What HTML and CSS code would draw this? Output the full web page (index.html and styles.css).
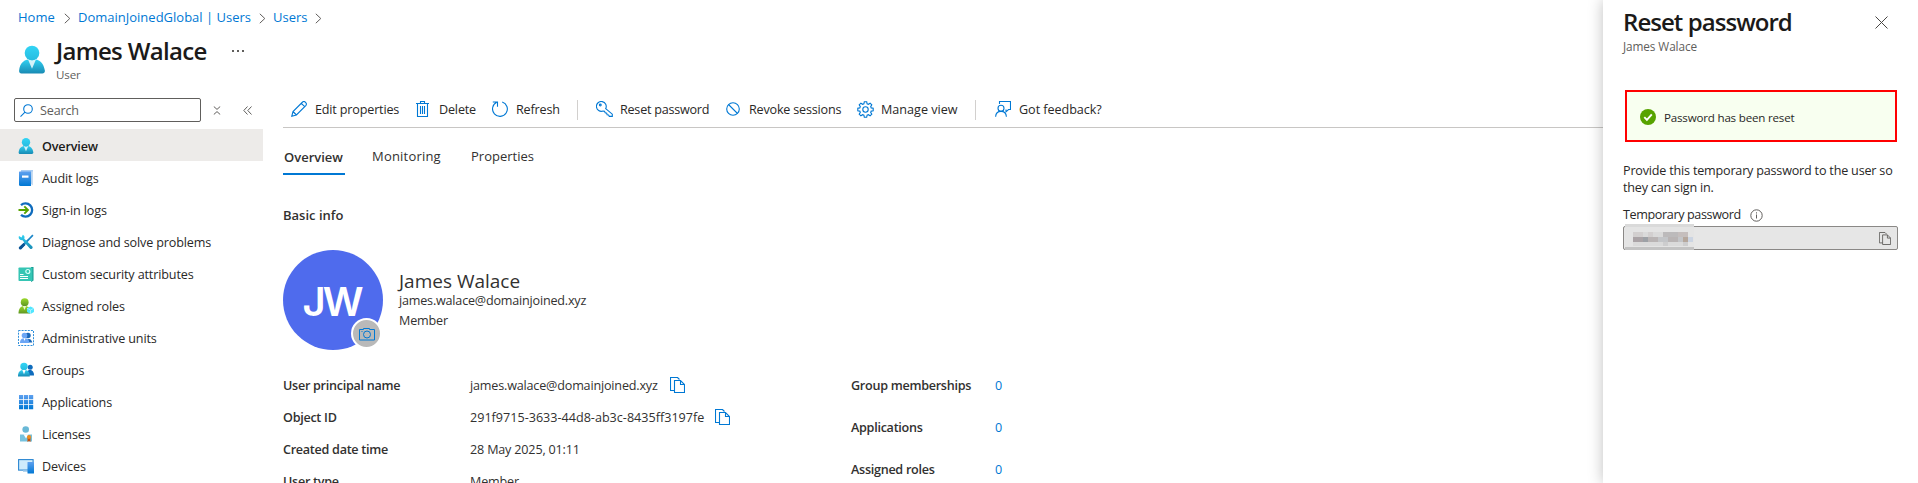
FILE: index.html
```
<!DOCTYPE html>
<html lang="en">
<head>
<meta charset="utf-8">
<title>James Walace - User</title>
<link rel="stylesheet" href="styles.css">
</head>
<body>
<svg class="defs" width="0" height="0" aria-hidden="true">
  <defs>
    <linearGradient id="cyan" x1="0" y1="0" x2="0" y2="1"><stop offset="0" stop-color="#32d4f5"/><stop offset="1" stop-color="#198ab3"/></linearGradient>
    <linearGradient id="cyan-head" x1="0" y1="0" x2="0" y2="1"><stop offset="0" stop-color="#32d4f5"/><stop offset="1" stop-color="#27bce0"/></linearGradient>
    <linearGradient id="blue" x1="0" y1="0" x2="0" y2="1"><stop offset="0" stop-color="#5ea0ef"/><stop offset="1" stop-color="#0078d4"/></linearGradient>
    <linearGradient id="green" x1="0" y1="0" x2="0" y2="1"><stop offset="0" stop-color="#9bd92b"/><stop offset="1" stop-color="#5e9624"/></linearGradient>
    <symbol id="user" viewBox="0 0 18 18">
      <path d="M15.7 18c.9 0 1.6-.7 1.6-1.6v-.2C16.6 11.300 14 8.600 9 8.600S1.200 11 .7 16.200C.6 17.100 1.300 18 2.200 18z" fill="url(#cyan)"/>
      <path d="M9 9.500c-1 0-1.900-.3-2.700-.8L9 15l2.700-6.300c-.8.5-1.700.8-2.700.8z" fill="#fff" opacity=".8"/>
      <circle cx="9" cy="4.800" r="4.700" fill="url(#cyan-head)"/>
    </symbol>
    <symbol id="chev" viewBox="0 0 7 11"><path d="M.8.800 5.800 5.500.8 10.200" fill="none" stroke="#605e5c"/></symbol>
    <symbol id="copy" viewBox="0 0 15 16"><path d="M4.500 13.500h-4V.500h7l2 2M4.500 3.500h6l4 4v8h-10zM10.500 3.500v4h4" fill="none" stroke="currentColor" stroke-width="1.100"/></symbol>
  </defs>
</svg>

<div class="blade">
  <nav class="crumbs">
    <a class="home">Home</a><svg><use href="#chev"/></svg>
    <a class="tenant">DomainJoinedGlobal | Users</a><svg><use href="#chev"/></svg>
    <a class="users">Users</a><svg><use href="#chev"/></svg>
  </nav>

  <header class="head">
    <svg class="head-icon"><use href="#user"/></svg>
    <div>
      <div class="head-line"><h1>James Walace</h1><span class="dots"><i></i><i></i><i></i></span></div>
      <div class="kind">User</div>
    </div>
  </header>

  <div class="body">
    <aside class="side">
      <div class="search-row">
        <div class="search">
          <svg width="13" height="13" viewBox="0 0 13 13" fill="none" stroke="#0078d4" stroke-width="1.100"><circle cx="8" cy="5" r="4.300"/><path d="M5 8.200.5 12.600"/></svg>
          <span>Search</span>
        </div>
        <svg class="expand" width="8" height="9" viewBox="0 0 8 9" fill="none" stroke="#605e5c"><path d="M.8.500 4 3.400 7.200.500M.8 8.500 4 5.600l3.200 2.900"/></svg>
        <svg width="9" height="9" viewBox="0 0 9 9" fill="none" stroke="#605e5c"><path d="M4.500.500.800 4.500l3.700 4M8.500.500 4.800 4.500l3.700 4"/></svg>
      </div>
      <ul class="menu">
        <li class="on"><svg viewBox="0 0 18 18"><use href="#user"/></svg>Overview</li>
        <li><svg viewBox="0 0 16 16"><path d="M3 0h12v14H3z" fill="#a9cdf3"/><path d="M13.500 1.500H15V15l-1.500.5z" fill="#c8dcf0"/><path d="M1.500 1.500H13V16H2.500a1.500 1.500 0 0 1-1.500-1.500V2z" fill="url(#blue)"/><path d="M4 5.500h6.500v2.200H4z" fill="#fff"/></svg>Audit logs</li>
        <li><svg viewBox="0 0 16 16"><path d="M3 3.200A6.600 6.600 0 1 1 3 12.800" fill="none" stroke="#0f6cbd" stroke-width="2.300"/><path d="M.5 8h9M6.300 4.300 10 8l-3.700 3.700" fill="none" stroke="#57a300" stroke-width="1.900"/></svg>Sign-in logs</li>
        <li><svg viewBox="0 0 16 16"><path d="m14.300.500 1.200 1.200L12.300 5 3.200 15.200 1 13.200 11 4z" fill="#1b86c8"/><path d="M4.800.700 3.500 3.400 1 2C0 4.200 1.700 6.500 4.200 6.100l7.700 8.300c1.600 1.600 3.800-.5 2.300-2.100L6.300 4.700C6.900 2.800 6.400 1.400 4.800.700z" fill="url(#cyan)"/><path d="m1 13.200 4.500-4.100 1.900 2-4.200 4.100c-1.200.9-3.100-.7-2.200-2z" fill="#0b5394"/></svg>Diagnose and solve problems</li>
        <li><svg viewBox="0 0 16 16"><path d="M13 1h2.500v13.500L13 16z" fill="#12988e"/><rect x=".5" y="1.500" width="14" height="13.500" rx=".8" fill="#36c5b4"/><path d="M2 8.500h3.500M2 10.500h8M2 12.500h8" stroke="#fff"/><circle cx="9.800" cy="5.500" r="2" fill="none" stroke="#d8fff9" stroke-width="1.200"/></svg>Custom security attributes</li>
        <li><svg viewBox="0 0 16 16"><path d="M.5 15.500C.5 10.500 2.500 8 6.500 8s6.500 2.500 6.500 7.500z" fill="url(#green)"/><path d="M4.800 8h3.400L6.500 12z" fill="#e8f7d0"/><circle cx="6.700" cy="4.200" r="3.900" fill="url(#green)"/><path d="m12.500 8.500 3.500 1.700v3.700L12.500 16 9 13.900v-3.700z" fill="#50e6ff"/><path d="m9 10.200 3.500 1.800 3.500-1.800M12.500 12v4" fill="none" stroke="#c9f7ff" stroke-width=".7"/></svg>Assigned roles</li>
        <li><svg viewBox="0 0 16 16"><rect x=".5" y=".5" width="15" height="15" fill="none" stroke="#2f8fdb" stroke-dasharray="2 1.100"/><circle cx="10" cy="5.500" r="2.700" fill="#1967b8"/><path d="M8 12.500c0-4 5-5.500 6.300 0z" fill="#1967b8"/><circle cx="6.500" cy="5.500" r="2.800" fill="#6ca6f5"/><path d="M2 13c0-3.500 1.800-4.800 4.500-4.800S11.200 9.500 11.200 13z" fill="#6ca6f5"/><path d="M5.500 8.300h2L6.500 11z" fill="#fff"/></svg>Administrative units</li>
        <li><svg viewBox="0 0 16 16"><circle cx="12.200" cy="5.200" r="2.500" fill="#0f6cbd"/><path d="M8 13.500c0-4 2-5.500 4-5.500s4 1.500 4 5.500z" fill="#0f6cbd"/><circle cx="6" cy="4.500" r="3.700" fill="url(#cyan-head)"/><path d="M0 14.500C0 10 2 7.800 5.900 7.800S11.800 10 11.800 14.500z" fill="url(#cyan)"/><path d="M4.300 8h3.400L6 12.200z" fill="#fff"/></svg>Groups</li>
        <li><svg viewBox="0 0 16 16"><path d="M1 1h4.200v4.200H1zM6 1h4.200v4.200H6zM11 1h4.200v4.200H11zM1 6h4.200v4.200H1zM6 6h4.200v4.200H6zM11 6h4.200v4.200H11zM1 11h4.200v4.200H1zM6 11h4.200v4.200H6zM11 11h4.200v4.200H11z" fill="url(#blue)"/></svg>Applications</li>
        <li><svg viewBox="0 0 16 16"><path d="M2 15.500V8.500h12v7z" fill="#76c2de"/><path d="M5.500 8.300h5L8 12.500z" fill="#fff"/><circle cx="7.700" cy="3.500" r="3.300" fill="#69b8d6"/><path d="M9.500 11h3v5l-1.500-1-1.500 1z" fill="#c2500d"/><circle cx="11" cy="11" r="2" fill="#f08c1a"/></svg>Licenses</li>
        <li><svg viewBox="0 0 16 16"><rect x=".6" y="1.600" width="14.500" height="10.500" fill="#cfebfc" stroke="#2a86d1" stroke-width="1.100"/><path d="M5 12.500h5V14H5z" fill="#b4d5ee"/><rect x="9.500" y="4" width="6.500" height="11.500" rx=".5" fill="url(#blue)"/></svg>Devices</li>
      </ul>
    </aside>

    <main class="main">
      <div class="bar">
        <span class="cmd edit"><svg width="16" height="16" viewBox="0 0 16 16"><path d="m.8 15.200 1.200-4.700L11.600 1c1.800-1.500 4.800 1.200 3.400 3.300L5.400 14zM2 10.500 5.400 14M10.300 2.300l3.400 3.400"/></svg>Edit properties</span>
        <span class="cmd del"><svg width="13" height="16" viewBox="0 0 13 16"><path d="M0 2.500h13M4.500 2.500v-2h4v2M1.500 2.500v13h10v-13M4.500 5v8M6.500 5v8M8.500 5v8"/></svg>Delete</span>
        <span class="cmd refresh"><svg width="16" height="16" viewBox="0 0 16 16"><path d="M10.200.9A7.400 7.400 0 1 1 4.700 1.300M.8 1h4.700v4.700"/></svg>Refresh</span>
        <span class="sep s1"></span>
        <span class="cmd reset"><svg width="17" height="16" viewBox="0 0 17 16"><path d="M9.700 7.600A4.900 4.900 0 1 0 7 10l1.500.2.700 1.600 1.500.3.400 1.600 1.500.2.700 1.500h3v-2.200z"/><circle cx="4.300" cy="4" r=".9"/></svg>Reset password</span>
        <span class="cmd revoke"><svg width="14" height="14" viewBox="0 0 14 14"><circle cx="7" cy="7" r="6.300"/><path d="m2.500 2.500 9 9"/></svg>Revoke sessions</span>
        <span class="cmd manage"><svg width="17" height="17" viewBox="0 0 17 17"><circle cx="8.500" cy="8.500" r="2.700"/><path d="M7.300.800h2.400l.4 2 1.300.5L13.100 2.200l1.700 1.700-1.100 1.700.5 1.300 2 .4v2.400l-2 .4-.5 1.300 1.100 1.700-1.700 1.700-1.700-1.100-1.300.5-.4 2H7.300l-.4-2-1.300-.5-1.700 1.100-1.700-1.700 1.100-1.700-.5-1.300-2-.4V7.300l2-.4.500-1.300L2.200 3.900l1.700-1.700 1.700 1.100 1.300-.5z"/></svg>Manage view</span>
        <span class="sep s2"></span>
        <span class="cmd feedback"><svg width="16" height="16" viewBox="0 0 16 16"><path d="M4.500 3V.500h11v8h-2l-2.500 2.300V8.500"/><circle cx="6" cy="7.300" r="3"/><path d="M.6 15.800c.4-7.200 10.400-7.200 10.800 0"/></svg>Got feedback?</span>
      </div>

      <div class="tabs"><span class="tab on">Overview</span><span class="tab mon">Monitoring</span><span class="tab prop">Properties</span></div>
      <h2>Basic info</h2>

      <section class="person">
        <div class="avatar">
          <span>JW</span>
          <div class="camera"><svg width="16" height="14" viewBox="0 0 16 14" fill="none" stroke="#0078d4"><path d="M.5 2.500h4v-1h6v1h5v10.500H.5z"/><circle cx="8" cy="7.500" r="3.500"/><path d="M2.500 4.500h1"/></svg></div>
        </div>
        <div class="who"><div class="name">James Walace</div><div class="mail">james.walace@domainjoined.xyz</div><div class="role">Member</div></div>
      </section>

      <section class="facts">
        <dl class="left">
          <dt>User principal name</dt><dd>james.walace@domainjoined.xyz<svg><use href="#copy"/></svg></dd>
          <dt>Object ID</dt><dd class="guid">291f9715-3633-44d8-ab3c-8435ff3197fe<svg><use href="#copy"/></svg></dd>
          <dt>Created date time</dt><dd>28 May 2025, 01:11</dd>
          <dt>User type</dt><dd>Member</dd>
        </dl>
        <dl class="right">
          <dt>Group memberships</dt><dd>0</dd>
          <dt>Applications</dt><dd>0</dd>
          <dt>Assigned roles</dt><dd>0</dd>
        </dl>
      </section>
    </main>
  </div>
</div>

<aside class="panel">
  <div class="panel-head">
    <h1>Reset password</h1>
    <svg width="13" height="13" viewBox="0 0 13 13" fill="none" stroke="#484644"><path d="m.5.500 12 12M12.500.500l-12 12"/></svg>
  </div>
  <div class="panel-sub">James Walace</div>
  <div class="notice">
    <svg width="16" height="16" viewBox="0 0 16 16"><circle cx="8" cy="8" r="8" fill="#57a300"/><path d="m4.300 8.200 2.600 2.600 4.900-5.400" fill="none" stroke="#fff" stroke-width="1.900"/></svg>
    <span>Password has been reset</span>
  </div>
  <p>Provide this temporary password to the user so<br>they can sign in.</p>
  <div class="label"><span>Temporary password</span><svg width="13" height="13" viewBox="0 0 13 13" fill="none" stroke="#605e5c"><circle cx="6.500" cy="6.500" r="5.700"/><path d="M6.500 5.500v4M6.500 3.300v1.200"/></svg></div>
  <div class="field">
    <svg class="mask" width="69" height="26" viewBox="0 0 69 26" shape-rendering="crispEdges">
      <path fill="#dadada" d="M0 0h69v3H0z"/><path fill="#e4e4e4" d="M0 3h69v20H0z"/><path fill="#c3c3c3" d="M0 23h69v3H0z"/>
      <path fill="#d2cfcf" d="M8 8h10v5H8zM23 8h5v5h-5z"/><path fill="#dadada" d="M18 8h5v5h-5zM28 8h10v5H28zM8 18h55v4H8z"/><path fill="#bcbabb" d="M38 8h15v5H38z"/><path fill="#c5bebd" d="M53 8h10v5H53z"/>
      <path fill="#aaa3a6" d="M8 13h10v5H8z"/><path fill="#9da1a6" d="M18 13h5v5h-5z"/><path fill="#b9b4b4" d="M23 13h10v5H23zM43 13h10v5H43z"/><path fill="#c3c5c8" d="M33 13h10v5H33zM53 13h5v5h-5z"/><path fill="#b5a79c" d="M58 13h5v5h-5z"/><path fill="#cbd4e2" d="M63 13h5v5h-5z"/>
      <path fill="#cdcdce" d="M38 18h5v4h-5zM58 18h5v4h-5z"/>
    </svg>
    <svg class="field-copy" viewBox="0 0 15 16"><use href="#copy"/></svg>
  </div>
</aside>
</body>
</html>
```
FILE: styles.css
```
* { box-sizing: border-box; }
body {
  margin: 0;
  height: 483px;
  overflow: hidden;
  display: flex;
  background: #fff;
  color: #292827;
  font: 12.6px/20px "Open Sans", "Noto Sans", sans-serif;
  letter-spacing: -0.17px;
}
h1, h2, p, ul, dl, dd { margin: 0; padding: 0; }
svg { display: block; flex: none; }
.defs { position: absolute; }

.blade { flex: 1; min-width: 0; overflow: hidden; }

.crumbs { display: flex; align-items: center; height: 34px; padding-left: 18px; color: #0078d4; font-size: 13px; letter-spacing: 0; }
.crumbs svg { width: 7px; height: 11px; margin: 2px 7px 0 8px; }
.crumbs .home { width: 37px; }
.crumbs .home + svg { margin-left: 9px; }
.crumbs .tenant { width: 173px; white-space: nowrap; }
.crumbs .users { width: 34px; }

.head { display: flex; height: 64px; padding-left: 18px; }
.head-icon { width: 28px; height: 29px; margin: 11px 10px 0 0; }
.head-line { display: flex; align-items: center; height: 33px; }
h1 { font-size: 24px; line-height: 32px; font-weight: 600; letter-spacing: -0.68px; color: #1b1a19; white-space: nowrap; }
.head-line h1 { width: 176px; }
.dots { display: flex; gap: 3px; padding-top: 1px; }
.dots i { width: 2px; height: 2px; background: #605e5c; }
.kind { font-size: 11.6px; line-height: 16px; letter-spacing: -0.15px; color: #605e5c; }

.body { display: flex; }
.side { width: 263px; margin-right: 20px; }
.search-row { display: flex; align-items: center; height: 24px; padding-left: 14px; }
.search { display: flex; align-items: center; gap: 7px; width: 187px; height: 24px; padding-left: 5px; border: 1px solid #605e5c; border-radius: 2px; color: #605e5c; }
.search span { padding-top: 2px; }
.expand { margin: 0 22px 0 12px; }
.menu { list-style: none; margin-top: 7px; }
.menu li { display: flex; align-items: center; height: 32px; padding: 3px 0 0 18px; white-space: nowrap; letter-spacing: -0.14px; }
.menu svg { width: 16px; height: 16px; margin: -1px 8px 0 0; }
.menu .on { background: #edebe9; font-weight: 600; color: #1b1a19; }

.main { flex: 1; min-width: 0; color: #323130; }
.bar { display: flex; align-items: center; height: 30px; padding: 0 0 6px 8px; border-bottom: 1px solid #c8c6c4; white-space: nowrap; color: #292827; }
.cmd { display: flex; align-items: center; gap: 8px; line-height: 22px; padding-top: 1px; }
.cmd svg { margin-top: -2px; fill: none; stroke: #0078d4; stroke-width: 1.1; }
.edit { width: 125px; }
.del { width: 76px; gap: 10px; }
.refresh { width: 85px; }
.sep { width: 1px; height: 20px; background: #d2d0ce; }
.s1 { margin-right: 18px; }
.reset { width: 130px; gap: 7px; letter-spacing: -0.24px; }
.revoke { width: 131px; gap: 9px; letter-spacing: -0.2px; }
.manage { width: 118px; gap: 7px; letter-spacing: 0; }
.s2 { margin-right: 19px; }
.feedback { gap: 8px; letter-spacing: -0.05px; }

.tabs { display: flex; height: 47px; padding-top: 18px; font-size: 13px; line-height: 20px; letter-spacing: 0; }
.tab.on { width: 62px; height: 29px; padding: 1px 0 0 1px; border-bottom: 2px solid #0078d4; font-weight: 600; }
.mon { margin-left: 27px; width: 99px; letter-spacing: 0.2px; }
h2 { margin-top: 30px; height: 20px; font-size: 13px; line-height: 20px; font-weight: 600; letter-spacing: 0; }

.person { display: flex; margin-top: 25px; height: 100px; }
.avatar { position: relative; display: flex; align-items: center; justify-content: center; width: 100px; height: 100px; border-radius: 50%; background: #4f6bed; color: #fff; font: 600 40px/50px Inter, sans-serif; letter-spacing: -3px; }
.avatar span { padding: 4px 3px 0 0; }
.camera { position: absolute; left: 68px; top: 68px; display: flex; align-items: center; justify-content: center; width: 31px; height: 31px; border: 2px solid #fff; border-radius: 50%; background: #b9b9b9; }
.who { margin-left: 16px; padding-top: 19px; }
.name { font-size: 19px; line-height: 24px; height: 22px; letter-spacing: 0; }
.mail { line-height: 20px; letter-spacing: -0.2px; }
.role { line-height: 20px; }

.facts { display: flex; padding-top: 20px; white-space: nowrap; }
.left { display: grid; grid-template-columns: 187px 381px; grid-auto-rows: 32px; line-height: 32px; letter-spacing: -0.2px; }
dt { font-weight: 600; letter-spacing: -0.28px; }
dd { display: flex; align-items: center; letter-spacing: -0.18px; }
dd svg { width: 15px; height: 16px; margin: -3px 0 0 12px; color: #0078d4; }
.guid { letter-spacing: 0; }
.guid svg { margin-left: 11px; }
.right { display: grid; grid-template-columns: 144px auto; grid-auto-rows: 42px; line-height: 32px; }
.right dd { height: 32px; color: #0078d4; }

.panel { position: relative; width: 315px; padding: 0 20px; background: #fff; box-shadow: 0 0 14px rgba(0, 0, 0, .25); color: #292827; }
.panel-head { display: flex; align-items: center; justify-content: space-between; height: 38px; padding: 7px 10px 0 0; }
.panel-head h1 { margin-top: -1px; letter-spacing: -0.95px; }
.panel-sub { font-size: 11.8px; line-height: 16px; letter-spacing: -0.1px; color: #605e5c; }
.notice { display: flex; align-items: center; gap: 8px; width: 272px; height: 52px; margin: 36px 0 0 2px; padding: 2px 0 0 13px; border: 2px solid #f00; background: #f8fff0; font-size: 11.6px; letter-spacing: -0.2px; }
.notice span { padding-top: 1px; }
.panel p { margin-top: 20px; line-height: 17px; letter-spacing: -0.2px; white-space: nowrap; }
.label { display: flex; align-items: center; gap: 9px; margin-top: 9px; height: 20px; letter-spacing: -0.38px; }
.field { position: relative; display: flex; align-items: center; justify-content: flex-end; width: 275px; height: 24px; margin-top: 1px; padding-right: 6px; border: 1px solid #8a8886; border-radius: 2px; background: #e6e6e6; color: #605e5c; }
.mask { position: absolute; left: 1px; top: -3px; }
.field-copy { width: 12px; height: 13px; }
```
